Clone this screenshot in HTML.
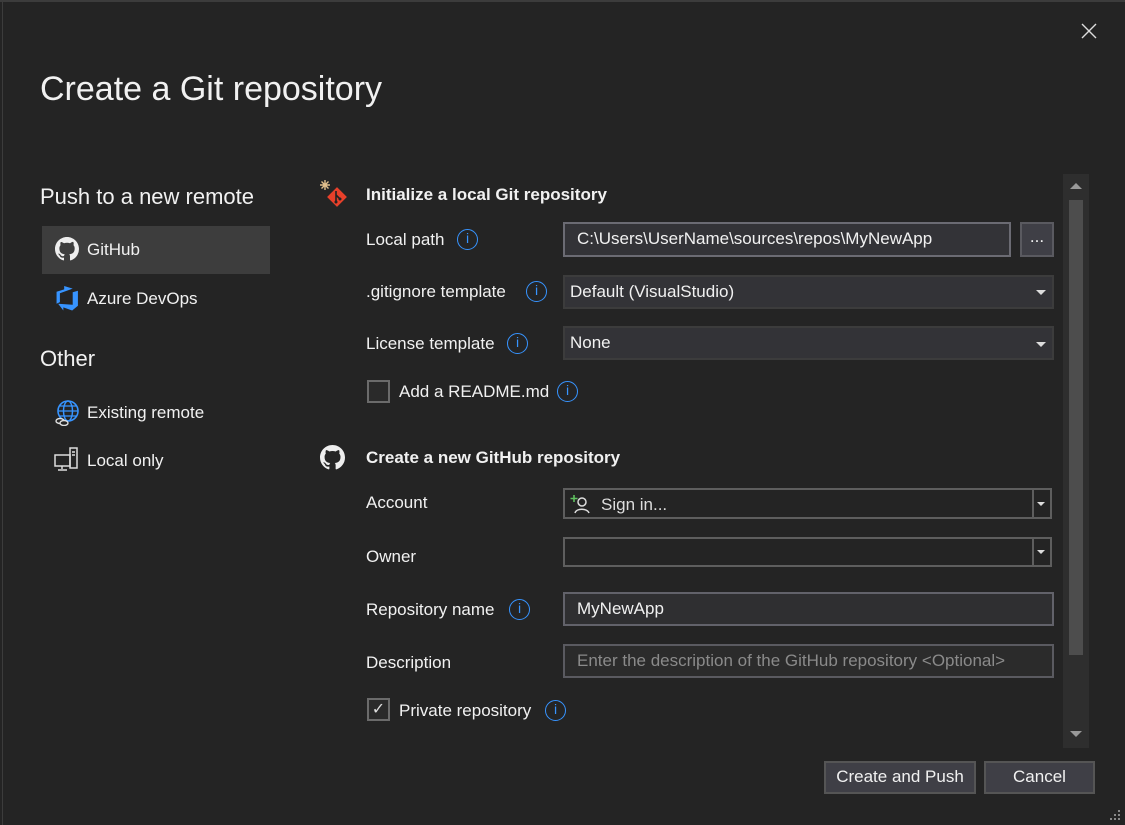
<!DOCTYPE html>
<html><head><meta charset="utf-8"><style>
*{box-sizing:border-box;margin:0;padding:0}
body{width:1125px;height:825px;background:#242424;font-family:"Segoe UI","Liberation Sans",sans-serif;color:#f1f1f1;position:relative;overflow:hidden;font-size:17px}
.a{position:absolute;white-space:nowrap}
.lbl{line-height:22px}
.box{position:absolute;background:#2d2d2d;border:2px solid #3f3f46}
.inp{position:absolute;background:#333337;border:2px solid #6b6b73;line-height:30px;padding-left:12px}
.info{position:absolute;width:21px;height:21px;border:1.8px solid #3794ff;border-radius:50%;color:#3794ff;font-size:14px;line-height:17px;text-align:center;font-family:"Liberation Sans",sans-serif}
.arrow{position:absolute;width:0;height:0;border-style:solid;border-width:5px 5px 0 5px;border-color:#ddd transparent transparent transparent}
.btn{position:absolute;background:#3f3f46;border:2px solid #555;text-align:center;line-height:28px}
.cb{position:absolute;width:23px;height:23px;border:2px solid #6b6b6b;background:#2a2a2a}
</style></head><body>
<div class="a" style="left:0;top:0;width:1125px;height:2px;background:#3c3c3c"></div>
<div class="a" style="left:2px;top:0;width:1px;height:825px;background:#3c3c3c"></div>
<svg class="a" style="left:1080px;top:22px" width="18" height="18"><path d="M2 2L16 16M16 2L2 16" stroke="#ddd" stroke-width="1.4"/></svg>
<div class="a" style="left:40px;top:70px;font-size:34px;font-weight:200;color:#f1f1f1">Create a Git repository</div>

<div class="a" style="left:40px;top:184px;font-size:22px">Push to a new remote</div>
<div class="a" style="left:42px;top:226px;width:228px;height:48px;background:#3d3d3d"></div>
<svg class="a" style="left:55px;top:237px" width="24" height="24" viewBox="0 0 16 16"><path fill="#eee" d="M8 0C3.58 0 0 3.58 0 8c0 3.54 2.29 6.53 5.47 7.59.4.07.55-.17.55-.38 0-.19-.01-.82-.01-1.49-2.01.37-2.53-.49-2.69-.94-.09-.23-.48-.94-.82-1.13-.28-.15-.68-.52-.01-.53.63-.01 1.08.58 1.23.82.72 1.21 1.87.87 2.33.66.07-.52.28-.87.51-1.07-1.78-.2-3.64-.89-3.64-3.95 0-.87.31-1.59.82-2.15-.08-.2-.36-1.02.08-2.12 0 0 .67-.21 2.2.82.64-.18 1.32-.27 2-.27.68 0 1.36.09 2 .27 1.53-1.04 2.2-.82 2.2-.82.44 1.1.16 1.92.08 2.12.51.56.82 1.27.82 2.15 0 3.07-1.87 3.75-3.65 3.95.29.25.54.73.54 1.48 0 1.07-.01 1.93-.01 2.2 0 .21.15.46.55.38A8.013 8.013 0 0016 8c0-4.42-3.58-8-8-8z"/></svg>
<div class="a lbl" style="left:87px;top:239px">GitHub</div>
<svg class="a" style="left:55px;top:286px" width="25" height="25" viewBox="0 0 24 24"><path fill="#3794ff" d="M22 4.5v14.5l-5.5 4.5-8.5-3v3l-5-6.5 14 1V6zM17 2.5L8.8 0v3.2L1.5 5.5V17l3.2-1.5V7z"/></svg>
<div class="a lbl" style="left:87px;top:288px">Azure DevOps</div>
<div class="a" style="left:40px;top:346px;font-size:22px">Other</div>
<svg class="a" style="left:54px;top:400px" width="26" height="26" viewBox="0 0 26 26"><circle cx="14" cy="11" r="10" fill="none" stroke="#3794ff" stroke-width="1.6"/><ellipse cx="14" cy="11" rx="4.5" ry="10" fill="none" stroke="#3794ff" stroke-width="1.4"/><path d="M4 11h20M6 6h16M6 16h16" stroke="#3794ff" stroke-width="1.3"/><ellipse cx="6" cy="21" rx="4" ry="2.5" fill="#242424" stroke="#ddd" stroke-width="1.4"/><ellipse cx="10" cy="23" rx="4" ry="2.5" fill="#242424" stroke="#ddd" stroke-width="1.4"/></svg>
<div class="a lbl" style="left:87px;top:402px">Existing remote</div>
<svg class="a" style="left:54px;top:447px" width="26" height="26" viewBox="0 0 26 26" fill="none" stroke="#ddd" stroke-width="1.5"><rect x="1" y="8" width="15" height="11"/><path d="M8 19v3M4 23h9"/><rect x="16" y="1" width="7" height="20"/><path d="M18 5h3M18 8h3"/></svg>
<div class="a lbl" style="left:87px;top:450px">Local only</div>

<svg class="a" style="left:319px;top:179px" width="30" height="30" viewBox="0 0 30 30"><path d="M6 1v10M1 6h10M2.5 2.5l7 7M9.5 2.5l-7 7" stroke="#e2c08d" stroke-width="1.4"/><rect x="11" y="11" width="14" height="14" transform="rotate(45 18 18)" fill="#e8402a"/><path d="M17 12v12M17 16l4 4" stroke="#222" stroke-width="1.6"/><circle cx="17" cy="23" r="1.5" fill="#222"/><circle cx="21" cy="20" r="1.5" fill="#222"/></svg>
<div class="a lbl" style="left:366px;top:184px;font-weight:bold">Initialize a local Git repository</div>
<div class="a lbl" style="left:366px;top:229px">Local path</div><div class="info" style="left:457px;top:229px">i</div>
<div class="inp" style="left:563px;top:222px;width:448px;height:35px">C:\Users\UserName\sources\repos\MyNewApp</div>
<div class="btn" style="left:1020px;top:222px;width:34px;height:35px;border-color:#5a5a60;line-height:26px">...</div>
<div class="a lbl" style="left:366px;top:281px">.gitignore template</div><div class="info" style="left:526px;top:281px">i</div>
<div class="box" style="left:563px;top:275px;width:491px;height:34px;background:#333337;border-color:#3c3c3c;line-height:30px;padding-left:5px">Default (VisualStudio)</div><div class="arrow" style="left:1036px;top:290px"></div>
<div class="a lbl" style="left:366px;top:333px">License template</div><div class="info" style="left:507px;top:333px">i</div>
<div class="box" style="left:563px;top:326px;width:491px;height:34px;background:#333337;border-color:#3c3c3c;line-height:30px;padding-left:5px">None</div><div class="arrow" style="left:1036px;top:342px"></div>
<div class="cb" style="left:367px;top:380px"></div>
<div class="a lbl" style="left:399px;top:381px">Add a README.md</div><div class="info" style="left:557px;top:381px">i</div>

<svg class="a" style="left:320px;top:445px" width="25" height="25" viewBox="0 0 16 16"><path fill="#eee" d="M8 0C3.58 0 0 3.58 0 8c0 3.54 2.29 6.53 5.47 7.59.4.07.55-.17.55-.38 0-.19-.01-.82-.01-1.49-2.01.37-2.53-.49-2.69-.94-.09-.23-.48-.94-.82-1.13-.28-.15-.68-.52-.01-.53.63-.01 1.08.58 1.23.82.72 1.21 1.87.87 2.33.66.07-.52.28-.87.51-1.07-1.78-.2-3.64-.89-3.64-3.95 0-.87.31-1.59.82-2.15-.08-.2-.36-1.02.08-2.12 0 0 .67-.21 2.2.82.64-.18 1.32-.27 2-.27.68 0 1.36.09 2 .27 1.53-1.04 2.2-.82 2.2-.82.44 1.1.16 1.92.08 2.12.51.56.82 1.27.82 2.15 0 3.07-1.87 3.75-3.65 3.95.29.25.54.73.54 1.48 0 1.07-.01 1.93-.01 2.2 0 .21.15.46.55.38A8.013 8.013 0 0016 8c0-4.42-3.58-8-8-8z"/></svg>
<div class="a lbl" style="left:366px;top:447px;font-weight:bold">Create a new GitHub repository</div>
<div class="a lbl" style="left:366px;top:492px">Account</div>
<div class="box" style="left:563px;top:488px;width:489px;height:31px;background:#242424;border-color:#5e5e5e"></div>
<div class="a" style="left:1032px;top:490px;width:2px;height:27px;background:#5e5e5e"></div><div class="arrow" style="left:1037px;top:502px;border-width:4px 4px 0 4px"></div>
<svg class="a" style="left:570px;top:494px" width="22" height="20" viewBox="0 0 22 20"><path d="M4 1v7M0.5 4.5h7" stroke="#5fbf5f" stroke-width="1.6"/><circle cx="12" cy="8" r="4" fill="none" stroke="#ddd" stroke-width="1.5"/><path d="M5 19c1.5-5 12-5 14 0" fill="none" stroke="#ddd" stroke-width="1.5"/></svg>
<div class="a lbl" style="left:601px;top:494px;color:#ddd">Sign in...</div>
<div class="a lbl" style="left:366px;top:546px">Owner</div>
<div class="box" style="left:563px;top:537px;width:489px;height:30px;background:#242424;border-color:#5e5e5e"></div>
<div class="a" style="left:1032px;top:539px;width:2px;height:26px;background:#5e5e5e"></div><div class="arrow" style="left:1037px;top:550px;border-width:4px 4px 0 4px"></div>
<div class="a lbl" style="left:366px;top:599px">Repository name</div><div class="info" style="left:509px;top:599px">i</div>
<div class="inp" style="left:563px;top:592px;width:491px;height:34px;background:#2f2f31;border-color:#62626a">MyNewApp</div>
<div class="a lbl" style="left:366px;top:652px">Description</div>
<div class="inp" style="left:563px;top:644px;width:491px;height:34px;background:#2b2b2b;border-color:#5a5a60;color:#8a8a8a">Enter the description of the GitHub repository &lt;Optional&gt;</div>
<div class="cb" style="left:367px;top:698px;color:#ddd;font-size:16px;line-height:19px;text-align:center">✓</div>
<div class="a lbl" style="left:399px;top:700px">Private repository</div><div class="info" style="left:545px;top:700px">i</div>

<div class="a" style="left:1063px;top:174px;width:26px;height:574px;background:#2e2e2e"></div>
<div class="a" style="left:1069px;top:200px;width:14px;height:455px;background:#4d4d4d"></div>
<div class="a" style="left:1070px;top:183px;width:0;height:0;border-style:solid;border-width:0 6px 6px 6px;border-color:transparent transparent #999 transparent"></div>
<div class="a" style="left:1070px;top:731px;width:0;height:0;border-style:solid;border-width:6px 6px 0 6px;border-color:#999 transparent transparent transparent"></div>

<div class="btn" style="left:824px;top:761px;width:152px;height:33px">Create and Push</div>
<div class="btn" style="left:984px;top:761px;width:111px;height:33px">Cancel</div>
<svg class="a" style="left:1108px;top:808px" width="14" height="14"><g fill="#888"><rect x="10" y="2" width="2" height="2"/><rect x="6" y="6" width="2" height="2"/><rect x="10" y="6" width="2" height="2"/><rect x="2" y="10" width="2" height="2"/><rect x="6" y="10" width="2" height="2"/><rect x="10" y="10" width="2" height="2"/></g></svg>
</body></html>
